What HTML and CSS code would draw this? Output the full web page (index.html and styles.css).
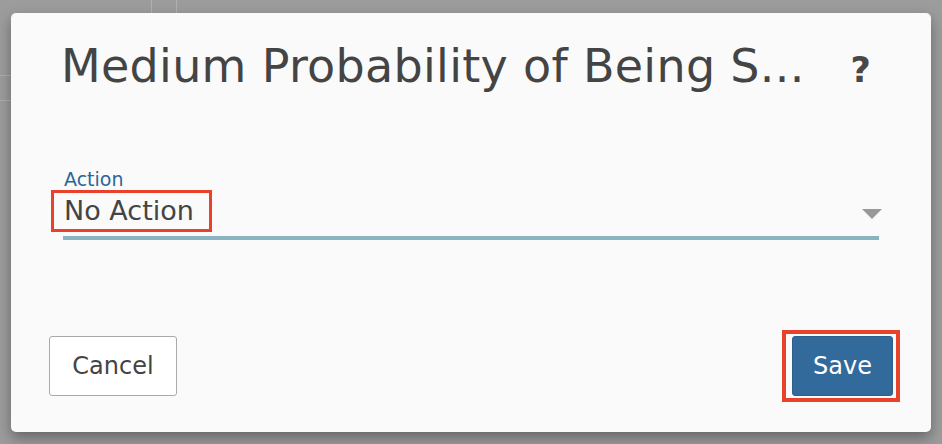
FILE: index.html
```html
<!DOCTYPE html>
<html>
<head>
<meta charset="utf-8">
<link rel="stylesheet" href="styles.css">
</head>
<body>
<div class="backdrop">
  <div class="bg-line v1"></div>
  <div class="bg-line v2"></div>
  <div class="bg-line h1"></div>
  <div class="bg-line h2"></div>
</div>
<div class="dialog">
  <div class="header">
    <h1 class="title">Medium Probability of Being S...</h1>
    <span class="help">?</span>
  </div>
  <div class="body">
    <div class="field">
      <div class="label">Action</div>
      <div class="select">
        <span class="value">No Action</span>
        <span class="caret"></span>
      </div>
    </div>
  </div>
  <div class="footer">
    <button class="btn cancel">Cancel</button>
    <div class="save-wrap"><button class="btn save">Save</button></div>
  </div>
</div>
</body>
</html>
```
FILE: styles.css
```css
html, body {
  margin: 0;
  padding: 0;
}
body {
  width: 942px;
  height: 444px;
  background: #9c9c9c;
  font-family: "DejaVu Sans", "Liberation Sans", sans-serif;
  overflow: hidden;
  position: relative;
  padding-top: 13px;
  box-sizing: border-box;
}
.backdrop {
  position: absolute;
  inset: 0;
}
.bg-line {
  position: absolute;
  background: #b0b0b0;
}
.v1 { left: 151px; top: 0; width: 1px; height: 13px; }
.v2 { left: 176px; top: 0; width: 1px; height: 13px; }
.h1 { left: 0; top: 75px; width: 11px; height: 1px; }
.h2 { left: 0; top: 100px; width: 11px; height: 1px; }

.dialog {
  position: relative;
  margin-left: 11px;
  width: 920px;
  height: 419px;
  background: #fafafa;
  border-radius: 5px;
  box-shadow: 0 6px 14px rgba(0,0,0,0.35);
  display: flex;
  flex-direction: column;
  box-sizing: border-box;
}
.header {
  display: flex;
  align-items: baseline;
  padding: 25px 0 0 50px;
  height: 120px;
  box-sizing: border-box;
}
.title {
  margin: 0;
  font-weight: normal;
  font-size: 46px;
  line-height: 56px;
  color: #444;
  letter-spacing: 0.3px;
}
.help {
  margin-left: 46px;
  font-size: 35px;
  font-weight: bold;
  color: #484848;
}
.body {
  padding: 36px 52px 0 52px;
  height: 200px;
  box-sizing: border-box;
}
.label {
  padding-left: 1px;
  font-size: 19px;
  line-height: 21px;
  color: #2c6698;
}
.select {
  display: flex;
  align-items: center;
  justify-content: space-between;
  border-bottom: 4px solid #8ab2c0;
  padding-bottom: 4px;
  margin-top: 0;
}
.value {
  margin-left: -12px;
  border: 3px solid #e8412c;
  padding: 1px 15px 1px 10px;
  font-size: 27px;
  line-height: 34px;
  color: #444;
}
.caret {
  width: 0;
  height: 0;
  border-left: 10px solid transparent;
  border-right: 10px solid transparent;
  border-top: 10px solid #999;
  margin-right: -3px;
  margin-top: 6px;
}
.footer {
  display: flex;
  justify-content: space-between;
  align-items: center;
  padding: 0 31px 34px 38px;
  height: 99px;
  box-sizing: border-box;
}
.btn {
  font-family: "DejaVu Sans", "Liberation Sans", sans-serif;
  font-size: 24px;
  border-radius: 3px;
  height: 60px;
  cursor: pointer;
}
.cancel {
  width: 128px;
  background: #fff;
  border: 1px solid #aaa;
  color: #444;
}
.save-wrap {
  border: 4px solid #e8412c;
  padding: 2px 3px 2px 6px;
}
.save {
  width: 101px;
  background: #336a9c;
  border: 1px solid #2d5f8c;
  color: #fff;
  display: block;
}
```
